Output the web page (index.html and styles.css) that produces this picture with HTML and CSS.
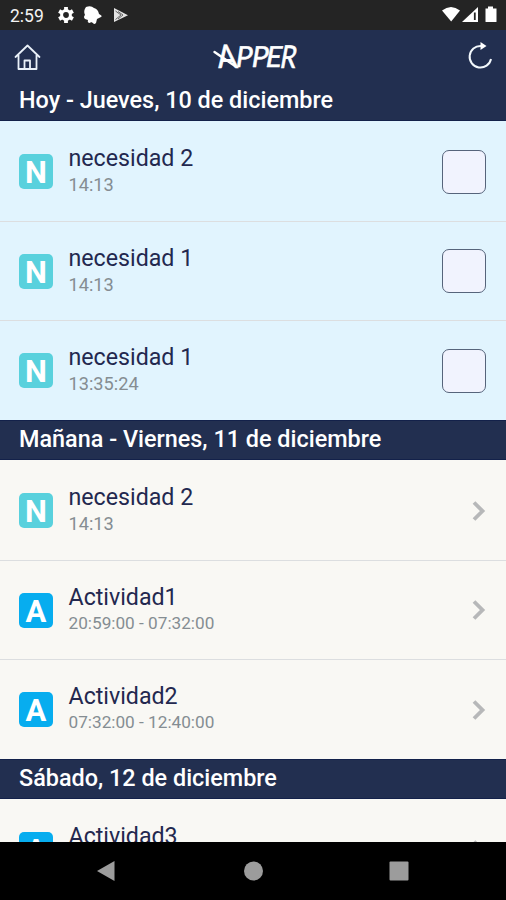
FILE: index.html
```html
<!DOCTYPE html>
<html lang="es">
<head>
<meta charset="utf-8">
<title>Apper</title>
<link rel="stylesheet" href="styles.css">
</head>
<body>
<div class="phone">
  <div class="status">
    <span class="clock">2:59</span>
    <svg class="status-left" width="72" height="22" viewBox="0 0 72 22" fill="#fff">
      <circle cx="8" cy="11" r="4.400" fill="none" stroke="#fff" stroke-width="3"/>
      <path d="M8 3V6M8 16V19M1.100 7L3.700 8.500M12.300 13.500L14.900 15M1.100 15L3.700 13.500M12.300 8.500L14.900 7" stroke="#fff" stroke-width="3.800"/>
      <path d="M28 3q5-2 8 1q4 1 5 6q4 2 2 3l-4 2l-1 4q-2 2-3 0l-2-1l-1 1q-3 0-2-3l-3-1q-2-2 0-4q-2-4 1-8z"/>
      <path d="M56 4L70 11.200L56 18z" fill="#e4e4e4"/>
      <path d="M57.500 7L63 11L57.500 15.500M60 7.500L65 11L60 15" fill="none" stroke="#666" stroke-width="1"/>
    </svg>
    <svg class="status-right" width="56" height="20" viewBox="0 0 56 20" fill="#fff">
      <path d="M0 5.500Q9 -1.500 18 5.500L9.200 16.500z"/>
      <path d="M20 17L36 2V17z"/>
      <path d="M32.800 7.500v7.500" stroke="#242424" stroke-width="1.800"/>
      <path d="M46 1.500h5v2h3.500v13q0 .5-.5 .5h-10q-.5 0-.5-.5v-13h2.500z"/>
    </svg>
  </div>
  <header class="bar">
    <svg class="home" width="28" height="28" viewBox="0 0 28 28" fill="none" stroke="#e9f0f8" stroke-width="1.800" stroke-linejoin="round" stroke-linecap="round">
      <path d="M3.500 14L15.500 2.500L27.500 14M6.500 12V26H24.500V12M12.500 26V17.500H18V26"/>
    </svg>
    <div class="logo">
      <span class="logo-text"><b class="a">A</b><b class="p1">P</b><b class="p2">P</b><b class="e">E</b><b class="r">R</b></span>
      <svg class="swash" width="26" height="28" viewBox="0 0 26 28" fill="none" stroke="#fff" stroke-width="2.400" stroke-linecap="round"><path d="M1.500 10L22 24"/></svg>
    </div>
    <svg class="refresh" width="28" height="28" viewBox="0 0 28 28">
      <path d="M15 3A10.800 10.800 0 1 0 25 16" fill="none" stroke="#f2f8fc" stroke-width="2"/>
      <path d="M14.500 -1L20.500 3L14.500 7z" fill="#fff"/>
    </svg>
  </header>
  <main class="agenda">
    <h2 class="day first">Hoy - Jueves, 10 de diciembre</h2>
    <ul class="list today">
      <li class="row"><span class="tag need">N</span><div class="info"><p class="name">necesidad 2</p><p class="time">14:13</p></div><span class="check"></span></li>
      <li class="row"><span class="tag need">N</span><div class="info"><p class="name">necesidad 1</p><p class="time">14:13</p></div><span class="check"></span></li>
      <li class="row"><span class="tag need">N</span><div class="info"><p class="name">necesidad 1</p><p class="time">13:35:24</p></div><span class="check"></span></li>
    </ul>
    <h2 class="day">Mañana - Viernes, 11 de diciembre</h2>
    <ul class="list">
      <li class="row"><span class="tag need">N</span><div class="info"><p class="name">necesidad 2</p><p class="time">14:13</p></div><svg class="chevron" width="14" height="22" viewBox="0 0 14 22"><path d="M2 2.500L10.500 11L2 19.500"/></svg></li>
      <li class="row"><span class="tag act">A</span><div class="info"><p class="name">Actividad1</p><p class="time range">20:59:00 - 07:32:00</p></div><svg class="chevron" width="14" height="22" viewBox="0 0 14 22"><path d="M2 2.500L10.500 11L2 19.500"/></svg></li>
      <li class="row"><span class="tag act">A</span><div class="info"><p class="name">Actividad2</p><p class="time range">07:32:00 - 12:40:00</p></div><svg class="chevron" width="14" height="22" viewBox="0 0 14 22"><path d="M2 2.500L10.500 11L2 19.500"/></svg></li>
    </ul>
    <h2 class="day">Sábado, 12 de diciembre</h2>
    <ul class="list">
      <li class="row"><span class="tag act">A</span><div class="info"><p class="name">Actividad3</p></div><svg class="chevron" width="14" height="22" viewBox="0 0 14 22"><path d="M2 2.500L10.500 11L2 19.500"/></svg></li>
    </ul>
  </main>
  <nav class="nav">
    <svg width="20" height="22" viewBox="0 0 20 22"><path d="M1 11L18.500 1V21z"/></svg>
    <svg width="20" height="20" viewBox="0 0 20 20"><circle cx="10.500" cy="10" r="9.500"/></svg>
    <svg width="20" height="20" viewBox="0 0 20 20"><rect x=".5" y=".5" width="19" height="19" rx="1"/></svg>
  </nav>
</div>
</body>
</html>
```
FILE: styles.css
```css
* { box-sizing: border-box; margin: 0; padding: 0; }
body { font-family: Roboto, "Liberation Sans", sans-serif; background: #000; }
.phone { width: 506px; height: 900px; display: flex; flex-direction: column; overflow: hidden; }
svg { display: block; flex: none; overflow: visible; }
.status { height: 30px; flex: none; background: #242424; color: #f4f4f4; display: flex; align-items: center; padding: 0 8px 0 10px; }
.clock { font-size: 17.5px; line-height: 30px; width: 48px; padding-top: 1px; }
.status-right { margin-left: auto; }
.bar { height: 50px; flex: none; background: #222f50; display: flex; align-items: center; justify-content: space-between; padding: 3px 12px 0 12px; }
.logo { position: relative; width: 82px; height: 32px; margin-left: 2px; }
.logo-text { display: flex; padding-left: 4px; font: 29px/30px Lato, sans-serif; color: #fff; white-space: nowrap; -webkit-text-stroke: .6px #fff; }
.logo-text b { font-weight: 400; display: block; transform-origin: center; }
.logo-text .a { width: 19px; transform: skewX(7deg) scaleY(1.12); }
.logo-text .p1 { width: 16px; transform: skewX(-8deg) scaleX(.95); }
.logo-text .p2 { width: 14px; transform: skewX(-9deg) scaleX(.95); }
.logo-text .e { width: 14px; transform: skewX(-10deg) scaleX(.95); }
.logo-text .r { transform: skewX(-10deg) scale(.88, 1.08); }
.swash { position: absolute; left: 0; top: 1px; }
.agenda { height: 762px; flex: none; overflow: hidden; }
.day { height: 40px; background: #222f50; color: #fff; font-size: 23.4px; font-weight: 500; line-height: 37px; padding-left: 19px; border-top: 1px solid #13214a; border-bottom: 1px solid #13214a; white-space: nowrap; }
.day.first { height: 41px; border-top: 0; line-height: 40px; }
.list { list-style: none; background: #f9f8f4; }
.today { background: #e1f4fe; }
.row { height: 99.667px; display: flex; align-items: center; padding: 1.5px 20px 0 19px; box-shadow: 0 1px 0 #dcdee0; }
.row:last-child { box-shadow: none; }
.tag { width: 34px; height: 35px; border-radius: 5px; color: #fff; font: bold 31px/37px Roboto, sans-serif; text-align: center; flex: none; }
.need { background: #59d1dd; }
.act { background: #07adef; }
.info { margin-left: 15.5px; flex: 1; height: 59px; }
.name { font-size: 23.2px; line-height: 32px; color: #23284f; }
.time { font-size: 18.2px; line-height: 21px; color: #858d92; }
.range { font-size: 17.2px; }
.check { width: 44px; height: 44px; border: 1.5px solid #56647b; border-radius: 7px; background: #f1f3fe; }
.chevron path { fill: none; stroke: #b7b8b9; stroke-width: 3.8; }
.nav { height: 58px; flex: none; background: #000; display: flex; align-items: center; justify-content: space-between; padding: 0 97px 0 96px; }
.nav svg { fill: #9c9c9c; }
```
